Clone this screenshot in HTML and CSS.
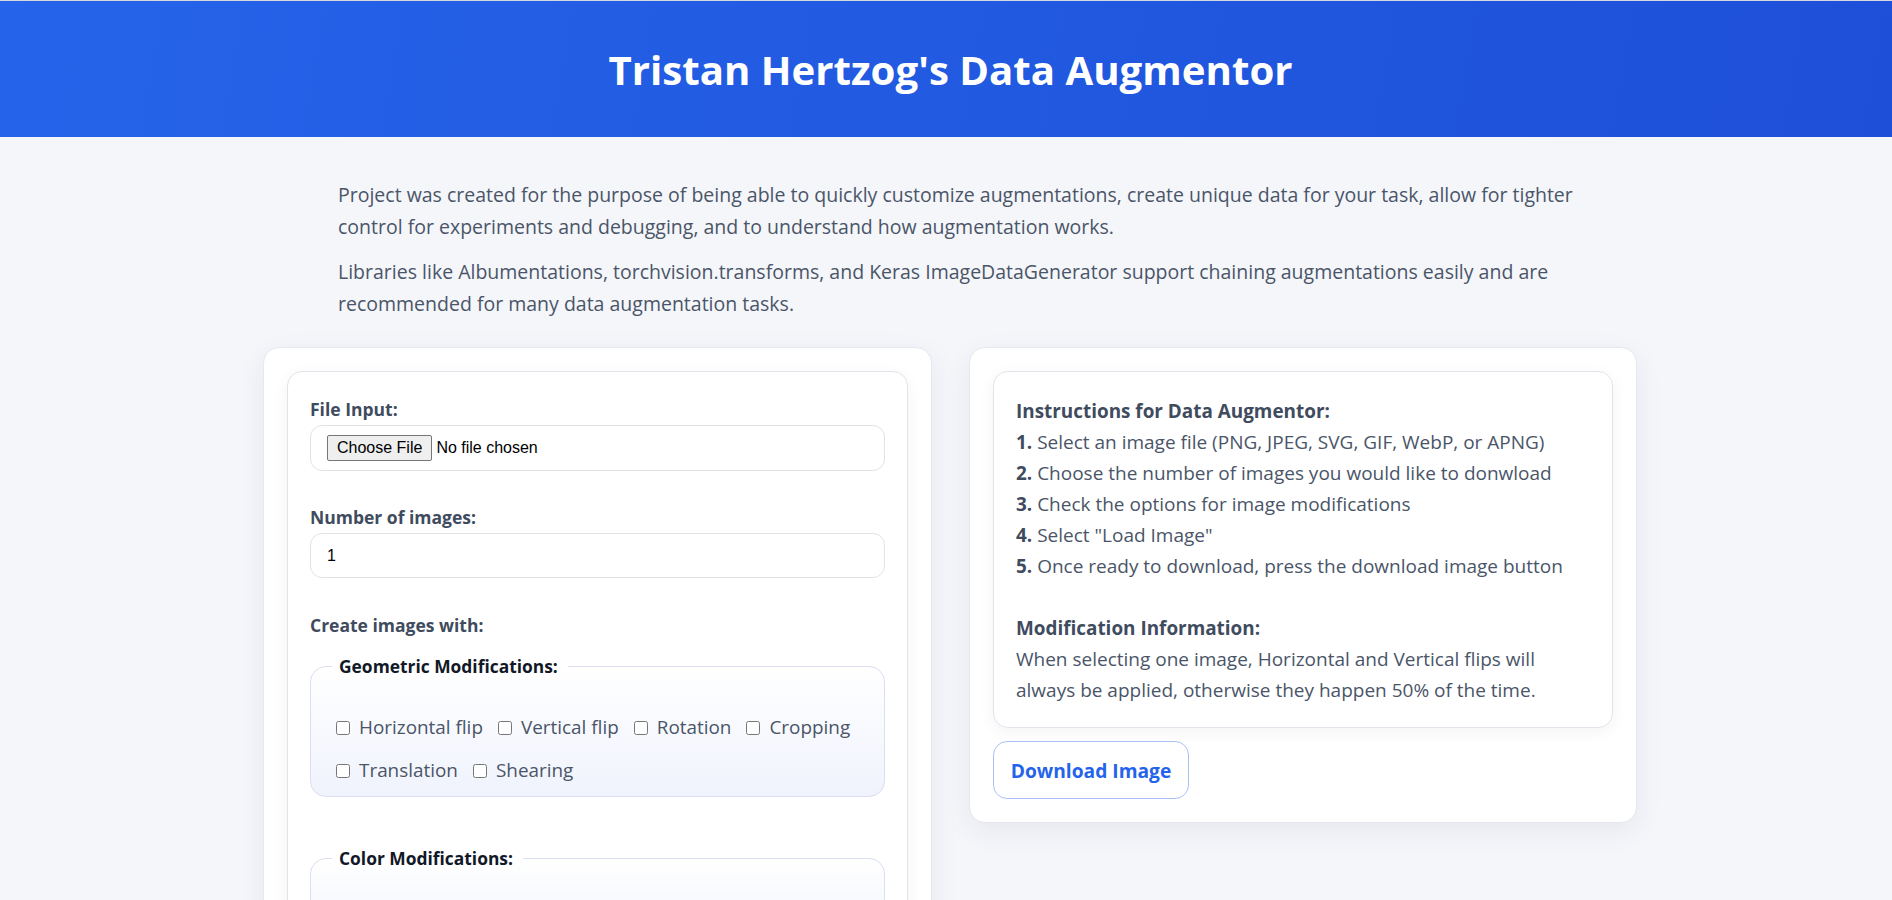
FILE: index.html
```html
<!DOCTYPE html>
<html lang="en">
<head>
<meta charset="utf-8">
<title>Tristan Hertzog's Data Augmentor</title>
<link rel="stylesheet" href="styles.css">
</head>
<body>
<header class="hero">
  <h1 class="hero-title">Tristan Hertzog's Data Augmentor</h1>
</header>
<main class="page">
  <section class="intro">
    <p>Project was created for the purpose of being able to quickly customize augmentations, create unique data for your task, allow for tighter control for experiments and debugging, and to understand how augmentation works.</p>
    <p>Libraries like Albumentations, torchvision.transforms, and Keras ImageDataGenerator support chaining augmentations easily and are recommended for many data augmentation tasks.</p>
  </section>
  <div class="panels">
    <section class="card">
      <form class="panel">
        <label class="field-label" for="file">File Input:</label>
        <div class="field file-field"><input class="file-input" id="file" type="file"></div>
        <label class="field-label" for="count">Number of images:</label>
        <input class="field number-input" id="count" type="text" value="1">
        <p class="field-label">Create images with:</p>
        <fieldset class="group">
          <legend class="group-title">Geometric Modifications:</legend>
          <div class="options">
            <label class="option"><input type="checkbox">Horizontal flip</label>
            <label class="option"><input type="checkbox">Vertical flip</label>
            <label class="option"><input type="checkbox">Rotation</label>
            <label class="option"><input type="checkbox">Cropping</label>
            <label class="option"><input type="checkbox">Translation</label>
            <label class="option"><input type="checkbox">Shearing</label>
          </div>
        </fieldset>
        <fieldset class="group">
          <legend class="group-title">Color Modifications:</legend>
          <div class="options">
            <label class="option"><input type="checkbox">Brightness</label>
            <label class="option"><input type="checkbox">Contrast</label>
            <label class="option"><input type="checkbox">Saturation</label>
            <label class="option"><input type="checkbox">Hue</label>
          </div>
        </fieldset>
      </form>
    </section>
    <section class="card card-right">
      <div class="panel info">
        <strong>Instructions for Data Augmentor:</strong><br>
        <strong>1.</strong> Select an image file (PNG, JPEG, SVG, GIF, WebP, or APNG)<br>
        <strong>2.</strong> Choose the number of images you would like to donwload<br>
        <strong>3.</strong> Check the options for image modifications<br>
        <strong>4.</strong> Select "Load Image"<br>
        <strong>5.</strong> Once ready to download, press the download image button<br>
        <br>
        <strong>Modification Information:</strong><br>
        When selecting one image, Horizontal and Vertical flips will always be applied, otherwise they happen 50% of the time.
      </div>
      <button class="download" type="button">Download Image</button>
    </section>
  </div>
</main>
</body>
</html>
```

FILE: styles.css
```css
* { box-sizing: border-box; }

html, body {
  margin: 0;
  padding: 0;
}

body {
  background: #f5f6fa;
  font-family: "Open Sans", "Noto Sans", sans-serif;
  color: #4a5568;
  overflow: hidden;
}

.hero {
  height: 137px;
  padding-left: 9px;
  border-top: 1px solid #d4d8e0;
  background: linear-gradient(100deg, #2564ea 0%, #1e4fd8 100%);
  display: flex;
  align-items: center;
  justify-content: center;
}

.hero-title {
  margin: 0;
  color: #ffffff;
  font-size: 40.2px;
  font-weight: 700;
}

.page {
  width: 1374px;
  margin-left: calc(50% - 683px);
  padding-top: 42px;
}

.intro {
  padding: 0 19px 0 75px;
}

.intro p {
  margin: 0 0 13px;
  font-size: 19.5px;
  line-height: 32px;
  color: #4a5568;
}

.panels {
  display: grid;
  grid-template-columns: 669px 668px;
  column-gap: 37px;
  align-items: start;
  margin-top: 27px;
}

.card {
  background: #ffffff;
  border: 1px solid #e6e8ef;
  border-radius: 16px;
  padding: 23px;
  box-shadow: 0 8px 28px rgba(30, 41, 80, 0.07);
}

.panel {
  background: #ffffff;
  border: 1px solid #e1e4eb;
  border-radius: 15px;
  padding: 25px 22px 22px;
  box-shadow: 0 4px 16px rgba(30, 41, 80, 0.05);
  margin: 0;
}

.field-label {
  display: block;
  margin: 0 0 4px;
  font-size: 17.5px;
  line-height: 24px;
  font-weight: 700;
  color: #3f4b5e;
}

.field {
  display: flex;
  align-items: center;
  width: 100%;
  height: 46px;
  padding: 0 16px;
  border: 1px solid #e1e3e8;
  border-radius: 12px;
  background: #ffffff;
}

.file-field {
  margin: 0 0 34px;
}

.file-input {
  font-family: "Liberation Sans", Arial, sans-serif;
  font-size: 16px;
  color: #000;
}

.file-input::file-selector-button {
  font-family: "Liberation Sans", Arial, sans-serif;
  font-size: 16px;
  height: 26px;
  padding: 0 9px;
  margin-right: 4px;
  background: #efefef;
  border: 1px solid #767676;
  border-radius: 2px;
  color: #000;
}

.number-input {
  height: 45px;
  margin: 0 0 35px;
  font-family: "Liberation Sans", Arial, sans-serif;
  font-size: 16px;
  color: #000;
  outline: none;
}

.group {
  margin: 17px 0 49px;
  padding: 34px 20px 10px 21px;
  border: 1px solid #dcdff0;
  border-radius: 16px;
  background: linear-gradient(180deg, #ffffff 0%, #f0f3fd 100%);
  min-width: 0;
}

.group-title {
  padding: 0 10px 0 7px;
  font-size: 17.4px;
  line-height: 24px;
  font-weight: 700;
  color: #111827;
}

.options {
  display: flex;
  flex-wrap: wrap;
  column-gap: 11px;
  row-gap: 12px;
}

.option {
  display: inline-flex;
  align-items: center;
  font-size: 18.9px;
  line-height: 31px;
  color: #4a5568;
}

.option input {
  width: 14px;
  height: 14px;
  margin: 0 9px 0 4px;
}

.info {
  padding: 24px 22px 21px;
  font-size: 19px;
  line-height: 31px;
  color: #4a5568;
}

.info strong {
  color: #3f4b5e;
  font-weight: 700;
  font-size: 18.9px;
}

.download {
  display: block;
  margin-top: 13px;
  width: 196px;
  height: 58px;
  padding: 0;
  font-family: "Open Sans", "Noto Sans", sans-serif;
  font-size: 19.2px;
  font-weight: 700;
  color: #2563eb;
  background: #ffffff;
  border: 1px solid #a9c1f7;
  border-radius: 14px;
}
```
